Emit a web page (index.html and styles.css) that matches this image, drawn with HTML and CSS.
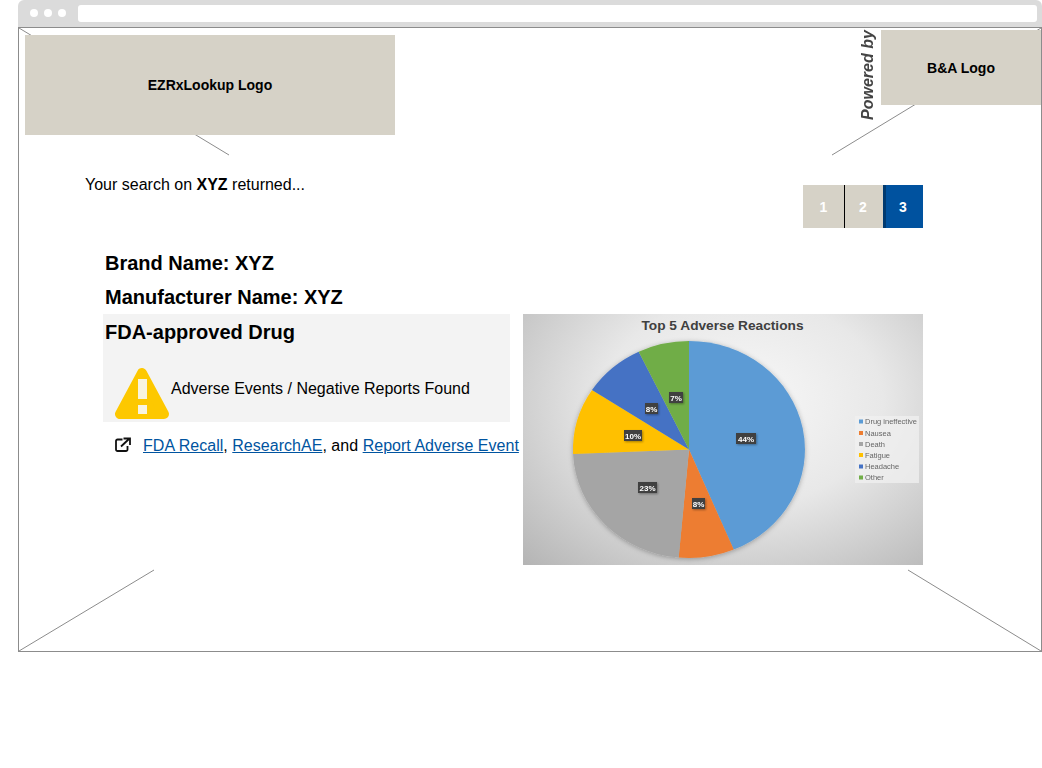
FILE: index.html
```html
<!DOCTYPE html>
<html lang="en">
<head>
<meta charset="utf-8">
<title>EZRxLookup results</title>
<link rel="stylesheet" href="styles.css">
</head>
<body>
<div class="browser">
  <div class="chrome">
    <div class="dots"><span class="dot"></span><span class="dot"></span><span class="dot"></span></div>
    <div class="address"></div>
  </div>
  <div class="viewport">
    <svg class="xlines" width="1022" height="623" viewBox="0 0 1022 623">
      <line x1="0" y1="0" x2="210" y2="127"/>
      <line x1="1022" y1="0" x2="813" y2="127"/>
      <line x1="0" y1="623" x2="135" y2="542"/>
      <line x1="1022" y1="623" x2="889" y2="542"/>
    </svg>
    <div class="content">
      <header class="header">
        <div class="logo logo-main">EZRxLookup Logo</div>
        <div class="brand">
          <div class="powered">Powered by</div>
          <div class="logo logo-partner">B&amp;A Logo</div>
        </div>
      </header>
      <div class="search-row">
        <p class="search-text">Your search on <b>XYZ</b> returned...</p>
        <nav class="pager">
          <span class="page page-one">1</span>
          <span class="page page-two">2</span>
          <span class="page page-active">3</span>
        </nav>
      </div>
      <section class="names">
        <h2 class="name">Brand Name: XYZ</h2>
        <h2 class="name">Manufacturer Name: XYZ</h2>
      </section>
      <section class="main">
        <div class="info">
          <div class="panel">
            <h2 class="panel-title">FDA-approved Drug</h2>
            <div class="alert">
              <svg class="warn" width="54" height="51" viewBox="0 0 54 51">
                <path class="warn-tri" d="M27 5 5 46H49Z"/>
                <rect class="warn-mark" x="23" y="11" width="9" height="20"/>
                <rect class="warn-mark" x="23" y="37" width="9" height="9"/>
              </svg>
              <span class="alert-text">Adverse Events / Negative Reports Found</span>
            </div>
          </div>
          <div class="links">
            <svg class="ext" width="16" height="16" viewBox="0 0 16 16">
              <path d="M7.500 2.500H2.500A1.500 1.500 0 0 0 1 4V12.500A1.500 1.500 0 0 0 2.500 14H11A1.500 1.500 0 0 0 12.500 12.500V9"/>
              <path d="M6 9.500 14.500 1.500M8.500 1.500H15V8"/>
            </svg>
            <span class="link-text"><a href="#">FDA Recall</a>, <a href="#">ResearchAE</a>, and <a href="#">Report Adverse Event</a></span>
          </div>
        </div>
        <figure class="chart">
          <svg width="400" height="251" viewBox="0 0 400 251">
            <defs>
              <filter id="soft" x="-10%" y="-10%" width="120%" height="120%">
                <feDropShadow dx="0" dy="1" stdDeviation="2.500" flood-color="#000" flood-opacity=".3"/>
              </filter>
              <filter id="tagshadow" x="-30%" y="-30%" width="170%" height="170%">
                <feDropShadow dx="1" dy="1" stdDeviation=".8" flood-color="#000" flood-opacity=".35"/>
              </filter>
            </defs>
            <text class="chart-title" x="199.500" y="16">Top 5 Adverse Reactions</text>
            <g filter="url(#soft)">
              <path class="s1" d="M166 135.500V27A116 108.500 0 0 1 210.700 235.600Z"/>
              <path class="s2" d="M166 135.500 210.700 235.600A116 108.500 0 0 1 155.700 243.600Z"/>
              <path class="s3" d="M166 135.500 155.700 243.600A116 108.500 0 0 1 50.100 140Z"/>
              <path class="s4" d="M166 135.500 50.100 140A116 108.500 0 0 1 69 76Z"/>
              <path class="s5" d="M166 135.500 69 76A116 108.500 0 0 1 115.700 37.700Z"/>
              <path class="s6" d="M166 135.500 115.700 37.700A116 108.500 0 0 1 166 27Z"/>
            </g>
            <g filter="url(#tagshadow)">
              <rect class="tag" x="213" y="119" width="20" height="11"/>
              <rect class="tag" x="169" y="184" width="13" height="11"/>
              <rect class="tag" x="115" y="168" width="19" height="11"/>
              <rect class="tag" x="101" y="116" width="18" height="11"/>
              <rect class="tag" x="122" y="89" width="13" height="11"/>
              <rect class="tag" x="146" y="78" width="14" height="11"/>
            </g>
            <g class="soft-text">
              <text class="tag-text" x="223" y="127.500">44%</text>
              <text class="tag-text" x="175.500" y="192.500">8%</text>
              <text class="tag-text" x="124.500" y="176.500">23%</text>
              <text class="tag-text" x="110" y="124.500">10%</text>
              <text class="tag-text" x="128.500" y="97.500">8%</text>
              <text class="tag-text" x="153" y="86.500">7%</text>
            </g>
            <rect class="legend-bg" x="332" y="102" width="64" height="67"/>
            <g class="soft-text">
              <rect class="s1" x="336" y="105.500" width="4" height="4"/><text class="legend" x="342" y="110">Drug ineffective</text>
              <rect class="s2" x="336" y="117" width="4" height="4"/><text class="legend" x="342" y="121.500">Nausea</text>
              <rect class="s3" x="336" y="128" width="4" height="4"/><text class="legend" x="342" y="132.500">Death</text>
              <rect class="s4" x="336" y="139" width="4" height="4"/><text class="legend" x="342" y="143.500">Fatigue</text>
              <rect class="s5" x="336" y="150.500" width="4" height="4"/><text class="legend" x="342" y="155">Headache</text>
              <rect class="s6" x="336" y="161.500" width="4" height="4"/><text class="legend" x="342" y="166">Other</text>
            </g>
          </svg>
        </figure>
      </section>
    </div>
  </div>
</div>
</body>
</html>
```
FILE: styles.css
```css
* { box-sizing: border-box; }
html, body { margin: 0; padding: 0; background: #fff; }
body { font-family: "Liberation Sans", Arial, sans-serif; color: #000; font-size: 16px; }

.browser { width: 1024px; margin-left: 18px; }
.chrome {
  height: 27px;
  background: #dbdbdb;
  border-radius: 6px 6px 0 0;
  display: flex;
  align-items: flex-start;
  padding: 5px 5px 0 12px;
}
.dots { display: flex; gap: 6px; width: 48px; padding-top: 4px; }
.dot { width: 8px; height: 8px; border-radius: 50%; background: #fff; }
.address { flex: 1; height: 17px; background: #fff; border-radius: 3px; }

.viewport {
  position: relative;
  height: 625px;
  border: 1px solid #8c8c8c;
  background: #fff;
}
.xlines { position: absolute; left: 0; top: 0; }
.xlines line { stroke: #8c8c8c; stroke-width: 1; }
.content { position: relative; }

.header {
  display: flex;
  justify-content: space-between;
  align-items: flex-start;
  height: 107px;
  padding-left: 6px;
}
.logo {
  background: #d6d2c7;
  display: flex;
  align-items: center;
  justify-content: center;
  font-weight: 700;
  font-size: 14px;
}
.logo-main { width: 370px; height: 100px; margin-top: 7px; }
.brand { display: flex; align-items: flex-start; margin-top: 2px; }
.logo-partner { width: 160px; height: 75px; }
.powered {
  writing-mode: vertical-rl;
  transform: rotate(180deg);
  height: 90px;
  width: 20px;
  line-height: 20px;
  font-weight: 700;
  font-style: italic;
  font-size: 16px;
  color: #444;
  margin-right: 3px;
  white-space: nowrap;
}

.search-row {
  display: flex;
  justify-content: space-between;
  align-items: flex-start;
  padding: 41px 118px 0 66px;
}
.search-text { margin: 0; line-height: 18px; }
.pager { display: flex; margin-top: 9px; height: 43px; }
.page {
  display: flex;
  align-items: center;
  justify-content: center;
  background: #d6d2c7;
  color: #fff;
  font-weight: 700;
  font-size: 14px;
}
.page-one { width: 42px; border-right: 1px solid #000; }
.page-two { width: 38px; padding-right: 2px; }
.page-active { width: 40px; background: #00529f; border-left: 3px solid #003a70; padding-right: 3px; }

.names { margin-top: 18px; padding-left: 86px; }
.name { margin: 0; font-size: 20px; font-weight: 700; line-height: 34px; }

.main { display: flex; padding-left: 84px; }
.info { width: 420px; }
.panel { width: 407px; height: 108px; background: #f3f3f3; }
.panel-title { margin: 0; padding-left: 2px; font-size: 20px; font-weight: 700; line-height: 36px; }
.alert { display: flex; align-items: flex-start; margin-top: 18px; padding-left: 12px; gap: 2px; }
.warn { flex: none; display: block; }
.warn-tri { fill: #fdc800; stroke: #fdc800; stroke-width: 10; stroke-linejoin: round; }
.warn-mark { fill: #f8f4e0; }
.alert-text { line-height: 18px; margin-top: 12px; }
.links { display: flex; align-items: flex-start; margin-top: 15px; padding-left: 12px; gap: 12px; white-space: nowrap; }
.ext { flex: none; display: block; }
.ext path { fill: none; stroke: #111; stroke-width: 1.800; }
.link-text { line-height: 18px; letter-spacing: .03px; }
.link-text a { color: #0054a0; text-decoration: underline; }

.chart {
  margin: 0;
  width: 400px;
  height: 251px;
  background: radial-gradient(ellipse farthest-corner at 55% 35%, #f8f8f8 0, #e8e8e8 45%, #b4b4b4 100%);
}
.chart svg { display: block; }
.chart-title { font-size: 13.700px; font-weight: 700; fill: #404040; text-anchor: middle; }
.s1 { fill: #5b9bd5; }
.s2 { fill: #ed7d31; }
.s3 { fill: #a5a5a5; }
.s4 { fill: #ffc000; }
.s5 { fill: #4472c4; }
.s6 { fill: #70ad47; }
.tag { fill: #404040; }
.tag-text { font-size: 8px; font-weight: 700; fill: #fff; text-anchor: middle; }
.legend-bg { fill: #f0f0f0; fill-opacity: .75; }
.legend { font-size: 7.500px; fill: #666; }
.soft-text { filter: blur(.35px); }
```
